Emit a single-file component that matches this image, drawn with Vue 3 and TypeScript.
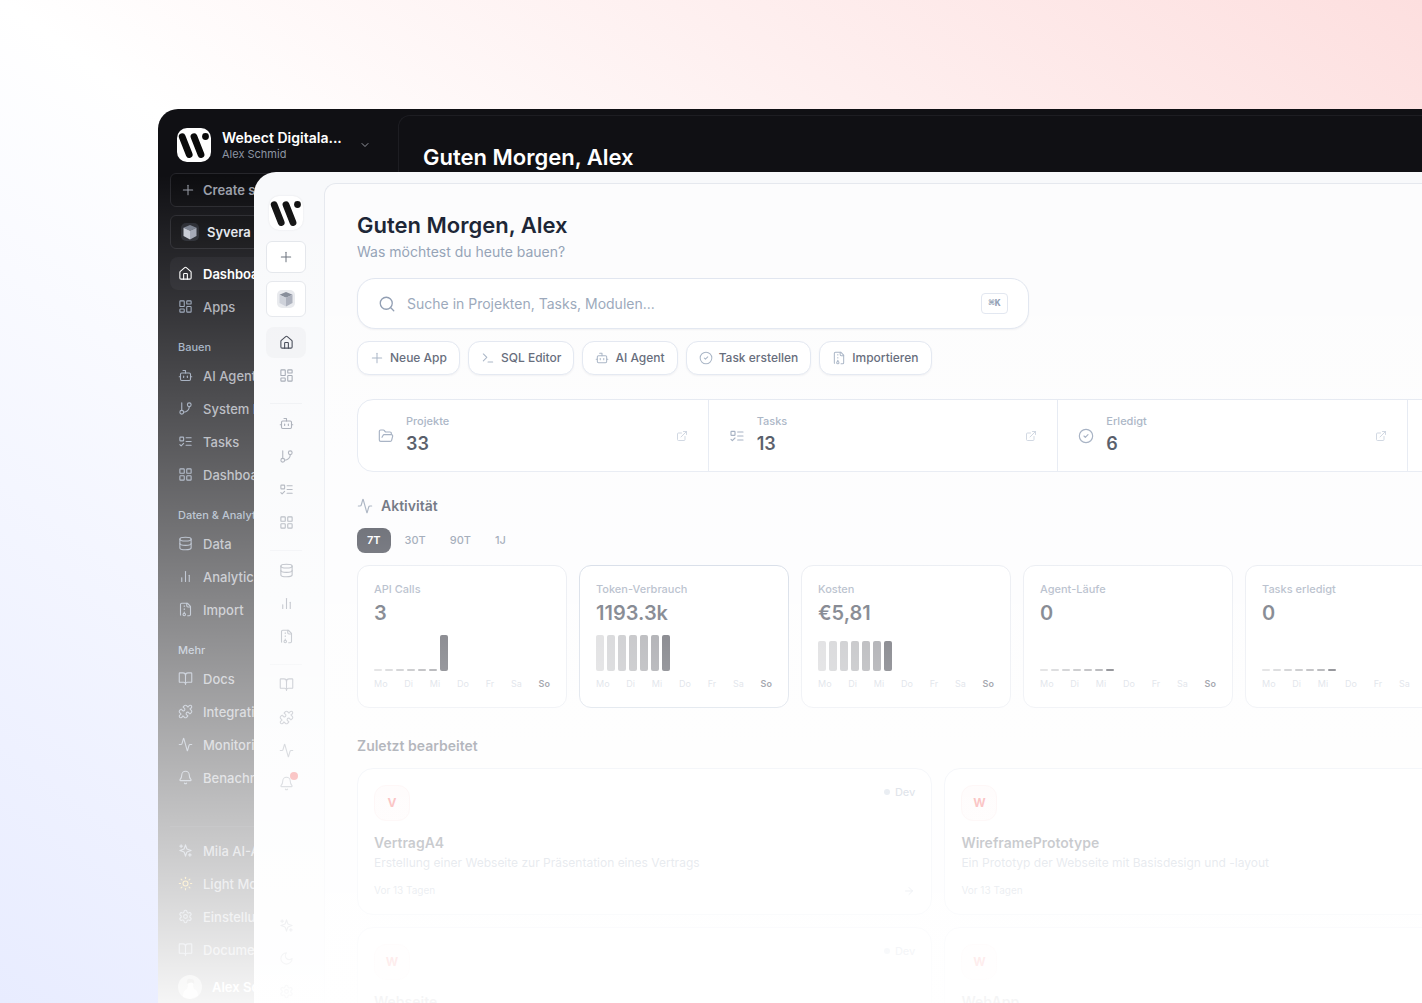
<script setup lang="ts">
interface NavItem {
  icon: string
  label: string
  active?: boolean
  badge?: boolean
  tone?: string
}
interface NavGroup {
  title?: string
  items: NavItem[]
}
interface Metric {
  label: string
  value: string
  bars: number[]
  active?: boolean
}
interface Project {
  name: string
  text?: string
}

const icons: Record<string, string> = {
  home: '<path d="M15 21v-8a1 1 0 0 0-1-1h-4a1 1 0 0 0-1 1v8"/><path d="M3 10a2 2 0 0 1 .709-1.528l7-5.999a2 2 0 0 1 2.582 0l7 5.999A2 2 0 0 1 21 10v9a2 2 0 0 1-2 2H5a2 2 0 0 1-2-2z"/>',
  apps: '<rect width="7" height="9" x="3" y="3" rx="1"/><rect width="7" height="5" x="14" y="3" rx="1"/><rect width="7" height="9" x="14" y="12" rx="1"/><rect width="7" height="5" x="3" y="16" rx="1"/>',
  bot: '<path d="M12 8V4H8"/><rect width="16" height="12" x="4" y="8" rx="2"/><path d="M2 14h2"/><path d="M20 14h2"/><path d="M15 13v2"/><path d="M9 13v2"/>',
  branch: '<path d="M6 3v12"/><circle cx="18" cy="6" r="3"/><circle cx="6" cy="18" r="3"/><path d="M18 9a9 9 0 0 1-9 9"/>',
  todo: '<rect x="3" y="5" width="6" height="6" rx="1"/><path d="m3 17 2 2 4-4"/><path d="M13 6h8"/><path d="M13 12h8"/><path d="M13 18h8"/>',
  grid: '<rect width="7" height="7" x="3" y="3" rx="1"/><rect width="7" height="7" x="14" y="3" rx="1"/><rect width="7" height="7" x="14" y="14" rx="1"/><rect width="7" height="7" x="3" y="14" rx="1"/>',
  data: '<ellipse cx="12" cy="5" rx="9" ry="3"/><path d="M3 5V19A9 3 0 0 0 21 19V5"/><path d="M3 12A9 3 0 0 0 21 12"/>',
  chart: '<path d="M18 20V10"/><path d="M12 20V4"/><path d="M6 20v-6"/>',
  archive: '<path d="M10 12v-1"/><path d="M10 18v-2"/><path d="M10 7V6"/><path d="M14 2v4a2 2 0 0 0 2 2h4"/><path d="M15.5 22H18a2 2 0 0 0 2-2V7l-5-5H6a2 2 0 0 0-2 2v16a2 2 0 0 0 .274 1.01"/><circle cx="10" cy="20" r="2"/>',
  book: '<path d="M12 7v14"/><path d="M3 18a1 1 0 0 1-1-1V4a1 1 0 0 1 1-1h5a4 4 0 0 1 4 4 4 4 0 0 1 4-4h5a1 1 0 0 1 1 1v13a1 1 0 0 1-1 1h-6a3 3 0 0 0-3 3 3 3 0 0 0-3-3z"/>',
  puzzle: '<path d="M15.39 4.39a1 1 0 0 0 1.68-.474 2.5 2.5 0 1 1 3.014 3.015 1 1 0 0 0-.474 1.68l1.683 1.682a2.414 2.414 0 0 1 0 3.414L19.61 15.39a1 1 0 0 1-1.68-.474 2.5 2.5 0 1 0-3.014 3.015 1 1 0 0 1 .474 1.68l-1.683 1.682a2.414 2.414 0 0 1-3.414 0L8.61 19.61a1 1 0 0 0-1.68.474 2.5 2.5 0 1 1-3.014-3.015 1 1 0 0 0 .474-1.68l-1.683-1.682a2.414 2.414 0 0 1 0-3.414L4.39 8.61a1 1 0 0 1 1.68.474 2.5 2.5 0 1 0 3.014-3.015 1 1 0 0 1-.474-1.68l1.683-1.682a2.414 2.414 0 0 1 3.414 0z"/>',
  activity: '<path d="M22 12h-2.48a2 2 0 0 0-1.93 1.46l-2.35 8.36a.25.25 0 0 1-.48 0L9.24 2.18a.25.25 0 0 0-.48 0l-2.35 8.36A2 2 0 0 1 4.49 12H2"/>',
  bell: '<path d="M10.268 21a2 2 0 0 0 3.464 0"/><path d="M3.262 15.326A1 1 0 0 0 4 17h16a1 1 0 0 0 .74-1.673C19.41 13.956 18 12.499 18 8A6 6 0 0 0 6 8c0 4.499-1.411 5.956-2.738 7.326"/>',
  sparkles: '<path d="m12 3-1.912 5.813a2 2 0 0 1-1.275 1.275L3 12l5.813 1.912a2 2 0 0 1 1.275 1.275L12 21l1.912-5.813a2 2 0 0 1 1.275-1.275L21 12l-5.813-1.912a2 2 0 0 1-1.275-1.275L12 3Z"/><path d="M5 3v4"/><path d="M19 17v4"/><path d="M3 5h4"/><path d="M17 19h4"/>',
  sun: '<circle cx="12" cy="12" r="4"/><path d="M12 2v2"/><path d="M12 20v2"/><path d="m4.93 4.93 1.41 1.41"/><path d="m17.66 17.66 1.41 1.41"/><path d="M2 12h2"/><path d="M20 12h2"/><path d="m6.34 17.66-1.41 1.41"/><path d="m19.07 4.93-1.41 1.41"/>',
  moon: '<path d="M12 3a6 6 0 0 0 9 9 9 9 0 1 1-9-9Z"/>',
  settings: '<path d="M12.22 2h-.44a2 2 0 0 0-2 2v.18a2 2 0 0 1-1 1.73l-.43.25a2 2 0 0 1-2 0l-.15-.08a2 2 0 0 0-2.73.73l-.22.38a2 2 0 0 0 .73 2.73l.15.1a2 2 0 0 1 1 1.72v.51a2 2 0 0 1-1 1.74l-.15.09a2 2 0 0 0-.73 2.73l.22.38a2 2 0 0 0 2.73.73l.15-.08a2 2 0 0 1 2 0l.43.25a2 2 0 0 1 1 1.73V20a2 2 0 0 0 2 2h.44a2 2 0 0 0 2-2v-.18a2 2 0 0 1 1-1.73l.43-.25a2 2 0 0 1 2 0l.15.08a2 2 0 0 0 2.73-.73l.22-.39a2 2 0 0 0-.73-2.73l-.15-.08a2 2 0 0 1-1-1.74v-.5a2 2 0 0 1 1-1.74l.15-.09a2 2 0 0 0 .73-2.73l-.22-.38a2 2 0 0 0-2.73-.73l-.15.08a2 2 0 0 1-2 0l-.43-.25a2 2 0 0 1-1-1.73V4a2 2 0 0 0-2-2z"/><circle cx="12" cy="12" r="3"/>',
  search: '<circle cx="11" cy="11" r="8"/><path d="m21 21-4.3-4.3"/>',
  plus: '<path d="M4 12h16"/><path d="M12 4v16"/>',
  terminal: '<path d="m4 17 6-6-6-6"/><path d="M12 19h8"/>',
  check: '<circle cx="12" cy="12" r="10"/><path d="m9 12 2 2 4-4"/>',
  folder: '<path d="m6 14 1.5-2.9A2 2 0 0 1 9.24 10H20a2 2 0 0 1 1.94 2.5l-1.54 6a2 2 0 0 1-1.95 1.5H4a2 2 0 0 1-2-2V5a2 2 0 0 1 2-2h3.9a2 2 0 0 1 1.69.9l.81 1.2a2 2 0 0 0 1.67.9H18a2 2 0 0 1 2 2v2"/>',
  external: '<path d="M15 3h6v6"/><path d="M10 14 21 3"/><path d="M18 13v6a2 2 0 0 1-2 2H5a2 2 0 0 1-2-2V8a2 2 0 0 1 2-2h6"/>',
  chevron: '<path d="m6 9 6 6 6-6"/>',
  arrow: '<path d="M5 12h14"/><path d="m12 5 7 7-7 7"/>',
}

const logo =
  '<path d="M5.200 8.700 12.200 26.500M17 8.700 24 26.500" stroke="#0a0a0a" stroke-width="6.800" stroke-linecap="round"/><circle cx="28.500" cy="8.500" r="3.400" fill="#0a0a0a"/>'
const cube =
  '<path d="M9 2 15.5 4.8 9 7.8 2.5 4.8Z" fill="#757c8b"/><path d="M2.500 4.800 9 7.800V16.500L2.500 13Z" fill="#c6cad4"/><path d="M15.500 4.800 9 7.800V16.500L15.500 13Z" fill="#9fa4b2"/>'

const groups: NavGroup[] = [
  { items: [{ icon: 'home', label: 'Dashboard', active: true }, { icon: 'apps', label: 'Apps' }] },
  {
    title: 'Bauen',
    items: [
      { icon: 'bot', label: 'AI Agent' },
      { icon: 'branch', label: 'System Map' },
      { icon: 'todo', label: 'Tasks' },
      { icon: 'grid', label: 'Dashboards' },
    ],
  },
  {
    title: 'Daten & Analytics',
    items: [
      { icon: 'data', label: 'Data' },
      { icon: 'chart', label: 'Analytics' },
      { icon: 'archive', label: 'Import' },
    ],
  },
  {
    title: 'Mehr',
    items: [
      { icon: 'book', label: 'Docs' },
      { icon: 'puzzle', label: 'Integrationen' },
      { icon: 'activity', label: 'Monitoring' },
      { icon: 'bell', label: 'Benachrichtigungen', badge: true },
    ],
  },
]

const darkFooter: NavItem[] = [
  { icon: 'sparkles', label: 'Mila AI-Agent' },
  { icon: 'sun', label: 'Light Mode', tone: 'sunny' },
  { icon: 'settings', label: 'Einstellungen' },
  { icon: 'book', label: 'Documentation' },
]
const lightFooter: NavItem[] = [
  { icon: 'sparkles', label: 'Mila AI-Agent' },
  { icon: 'moon', label: 'Dark Mode' },
  { icon: 'settings', label: 'Einstellungen' },
]

const actions = [
  { icon: 'plus', label: 'Neue App' },
  { icon: 'terminal', label: 'SQL Editor' },
  { icon: 'bot', label: 'AI Agent' },
  { icon: 'check', label: 'Task erstellen' },
  { icon: 'archive', label: 'Importieren' },
]

const stats = [
  { icon: 'folder', label: 'Projekte', value: '33' },
  { icon: 'todo', label: 'Tasks', value: '13' },
  { icon: 'check', label: 'Erledigt', value: '6' },
]

const ranges = ['7T', '30T', '90T', '1J']
const days = ['Mo', 'Di', 'Mi', 'Do', 'Fr', 'Sa', 'So']
const flat = [2, 2, 2, 2, 2, 2, 2]
const shades = [0.25, 0.32, 0.4, 0.47, 0.56, 0.65, 1]
const metrics: Metric[] = [
  { label: 'API Calls', value: '3', bars: [2, 2, 2, 2, 2, 2, 36] },
  { label: 'Token-Verbrauch', value: '1193.3k', bars: [36, 36, 36, 36, 36, 36, 36], active: true },
  { label: 'Kosten', value: '€5,81', bars: [30, 30, 30, 30, 30, 30, 30] },
  { label: 'Agent-Läufe', value: '0', bars: flat },
  { label: 'Tasks erledigt', value: '0', bars: flat },
]

const projects: Project[] = [
  { name: 'VertragA4', text: 'Erstellung einer Webseite zur Präsentation eines Vertrags' },
  { name: 'WireframePrototype', text: 'Ein Prototyp der Webseite mit Basisdesign und -layout' },
  { name: 'Webseite' },
  { name: 'WebApp' },
]
</script>

<template>
  <div class="stage">
    <section class="window dark">
      <aside class="side">
        <button class="workspace" type="button">
          <svg class="logo" viewBox="0 0 34 34" fill="none" v-html="logo" />
          <span class="who"><strong>Webect Digitala...</strong><small>Alex Schmid</small></span>
          <svg class="icon chevron" viewBox="0 0 24 24" v-html="icons.chevron" />
        </button>
        <button class="box create" type="button">
          <svg class="icon" viewBox="0 0 24 24" v-html="icons.plus" />Create something
        </button>
        <button class="box org" type="button">
          <svg class="cube" viewBox="0 0 18 18" v-html="cube" />Syvera GmbH
        </button>
        <nav>
          <template v-for="(group, g) in groups" :key="g">
            <h3 v-if="group.title">{{ group.title }}</h3>
            <a v-for="item in group.items" :key="item.label" href="#" :class="{ active: item.active }">
              <svg class="icon" viewBox="0 0 24 24" v-html="icons[item.icon]" />{{ item.label }}
            </a>
          </template>
        </nav>
        <nav class="foot">
          <a v-for="item in darkFooter" :key="item.label" href="#" :class="item.tone">
            <svg class="icon" viewBox="0 0 24 24" v-html="icons[item.icon]" />{{ item.label }}
          </a>
        </nav>
        <div class="user">
          <svg class="avatar" viewBox="0 0 24 24">
            <circle cx="12" cy="12" r="12" fill="#a3a5a2" />
            <path d="M5 22Q5 15 9 14L10 11Q8 5 12 4Q17 4 15 11L16 14Q20 15 20 21L12 24Z" fill="#f4f0ea" />
            <path d="M9 9Q8 3 13 4Q17 4 16 9Q14 6 9 9Z" fill="#5a544c" />
          </svg>
          <strong>Alex Schmid</strong>
        </div>
      </aside>
      <div class="panel"><h2>Guten Morgen, Alex</h2></div>
    </section>

    <section class="window light">
      <aside class="rail">
        <svg class="logo" viewBox="0 0 34 34" fill="none" v-html="logo" />
        <button class="tile" type="button" aria-label="Neu">
          <svg class="icon" viewBox="0 0 24 24" v-html="icons.plus" />
        </button>
        <button class="tile tall" type="button" aria-label="Organisation">
          <svg class="cube" viewBox="0 0 18 18" v-html="cube" />
        </button>
        <nav v-for="(group, g) in groups" :key="g">
          <a
            v-for="item in group.items"
            :key="item.label"
            href="#"
            :aria-label="item.label"
            :class="{ active: item.active }"
          >
            <svg class="icon" viewBox="0 0 24 24" v-html="icons[item.icon]" />
            <i v-if="item.badge" class="badge" />
          </a>
        </nav>
        <nav class="foot">
          <a v-for="item in lightFooter" :key="item.label" href="#" :aria-label="item.label">
            <svg class="icon" viewBox="0 0 24 24" v-html="icons[item.icon]" />
          </a>
        </nav>
      </aside>

      <main>
        <h1>Guten Morgen, Alex</h1>
        <p class="lead">Was möchtest du heute bauen?</p>
        <label class="search">
          <svg class="icon" viewBox="0 0 24 24" v-html="icons.search" />
          <input type="search" placeholder="Suche in Projekten, Tasks, Modulen..." aria-label="Suche" />
          <kbd>⌘K</kbd>
        </label>
        <div class="actions">
          <button v-for="a in actions" :key="a.label" type="button">
            <svg class="icon" viewBox="0 0 24 24" v-html="icons[a.icon]" />{{ a.label }}
          </button>
        </div>

        <div class="stats">
          <a v-for="s in stats" :key="s.label" href="#">
            <svg class="icon" viewBox="0 0 24 24" v-html="icons[s.icon]" />
            <span class="stat"><small>{{ s.label }}</small><b>{{ s.value }}</b></span>
            <svg class="icon ext" viewBox="0 0 24 24" v-html="icons.external" />
          </a>
          <div class="rest" />
        </div>

        <h2 class="activity">
          <svg class="icon" viewBox="0 0 24 24" v-html="icons.activity" />Aktivität
        </h2>
        <div class="tabs">
          <button v-for="(r, i) in ranges" :key="r" type="button" :class="{ on: i === 0 }">{{ r }}</button>
        </div>
        <div class="metrics">
          <article v-for="m in metrics" :key="m.label" :class="{ on: m.active }">
            <h3>{{ m.label }}</h3>
            <b>{{ m.value }}</b>
            <div class="bars">
              <i v-for="(h, i) in m.bars" :key="i" :style="{ height: h + 'px', opacity: shades[i] }" />
            </div>
            <div class="days"><span v-for="d in days" :key="d">{{ d }}</span></div>
          </article>
        </div>

        <h2 class="recent">Zuletzt bearbeitet</h2>
        <div class="projects">
          <article v-for="p in projects" :key="p.name">
            <header>
              <span class="initial">{{ p.name[0] }}</span>
              <span class="env">Dev</span>
            </header>
            <h3>{{ p.name }}</h3>
            <p v-if="p.text">{{ p.text }}</p>
            <footer v-if="p.text">
              Vor 13 Tagen
              <svg class="icon" viewBox="0 0 24 24" v-html="icons.arrow" />
            </footer>
          </article>
        </div>
      </main>
    </section>
  </div>
</template>

<style>
body {
  margin: 0;
  background: #fff;
}
</style>

<style scoped>
.stage {
  position: relative;
  height: 100vh;
  overflow: hidden;
  font-family: Inter, 'Liberation Sans', sans-serif;
  background: linear-gradient(to top right, #e8ecff 0%, #fff 50%, #fddfdf 100%);
}
.stage *,
.stage *::before,
.stage *::after {
  box-sizing: border-box;
}
h1,
h2,
h3,
p {
  margin: 0;
}
a {
  color: inherit;
  text-decoration: none;
}
button {
  font: inherit;
  color: inherit;
  cursor: pointer;
}
.icon {
  width: 15px;
  height: 15px;
  flex: none;
  fill: none;
  stroke: currentColor;
  stroke-width: 1.75;
  stroke-linecap: round;
  stroke-linejoin: round;
}
.logo {
  width: 34px;
  height: 34px;
  flex: none;
  border-radius: 10px;
  background: #fff;
}
.cube {
  width: 18px;
  height: 18px;
  flex: none;
  border-radius: 5px;
}

/* The two app windows overlap and run off the right and bottom edges. */
.window {
  position: absolute;
  display: flex;
  overflow: hidden;
}
.window::after {
  content: '';
  position: absolute;
  inset: 0;
  pointer-events: none;
}
.dark {
  left: 158px;
  top: 109px;
  right: 0;
  bottom: 0;
  border-radius: 20px 0 0 0;
  background: #101014;
  color: #a3a6af;
}
.dark::after {
  background: linear-gradient(rgba(255, 255, 255, 0) 66px, #fff 928px);
}
.light {
  left: 254px;
  top: 172px;
  bottom: 0;
  width: 133vw;
  border-radius: 22px 0 0 0;
  background: #f8f9fb;
}
.light::after {
  background: linear-gradient(rgba(255, 255, 255, 0) 0, #fff 865px);
}

/* Dark window */
.side {
  width: 240px;
  flex: none;
  padding: 19px 12px 0;
  display: flex;
  flex-direction: column;
}
.side > * {
  flex: none;
}
.workspace {
  display: flex;
  align-items: center;
  padding: 0 15px 0 7px;
  margin-bottom: 11px;
  border: 0;
  background: none;
  text-align: left;
}
.who {
  flex: 1;
  margin-left: 11px;
  display: flex;
  flex-direction: column;
}
.who strong {
  font-size: 14px;
  line-height: 18px;
  font-weight: 600;
  color: #fff;
}
.who small {
  font-size: 11px;
  line-height: 14px;
  color: #8d95a3;
}
.chevron {
  width: 12px;
  height: 12px;
}
.box {
  display: flex;
  align-items: center;
  height: 34px;
  padding: 0 10px;
  margin-bottom: 8px;
  border: 1px solid #26262b;
  border-radius: 6px;
  background: #0d0d10;
  font-size: 13px;
  font-weight: 600;
  white-space: nowrap;
}
.create {
  gap: 8px;
  color: #9a9ea8;
}
.create .icon {
  width: 14px;
  height: 14px;
}
.org {
  gap: 8px;
  color: #e4e7ee;
}
.dark .cube {
  background: #22242b;
}
nav {
  display: flex;
  flex-direction: column;
}
.side nav h3 {
  margin: 16px 8px 4px;
  font-size: 11px;
  line-height: 16px;
  font-weight: 500;
  color: #94a3b8;
}
.side nav a {
  display: flex;
  align-items: center;
  gap: 10px;
  height: 33px;
  padding: 0 8px;
  border-radius: 8px;
  font-size: 13px;
  font-weight: 500;
  white-space: nowrap;
}
.side nav a .icon {
  color: #8e9bb0;
}
.side nav a.active {
  background: #19191e;
  color: #fff;
  font-weight: 600;
}
.side nav a.active .icon {
  color: #fff;
}
.side nav a.sunny .icon {
  color: #f5b820;
}
.side .foot {
  margin-top: 32px;
  padding-top: 7px;
  border-top: 1px solid #1e1e24;
}
.user {
  display: flex;
  align-items: center;
  gap: 10px;
  height: 42px;
  padding: 0 8px;
  font-size: 13px;
  color: #fff;
}
.user strong {
  font-weight: 600;
}
.avatar {
  width: 24px;
  height: 24px;
  flex: none;
}
.panel {
  flex: 1;
  margin-top: 6px;
  padding: 25px 24px;
  border: solid #1d1d22;
  border-width: 1px 0 0 1px;
  border-radius: 12px 0 0 0;
}
.panel h2,
main h1 {
  font-size: 22px;
  line-height: 32px;
  font-weight: 600;
}
.panel h2 {
  color: #fff;
}

/* Light window: icon rail */
.rail {
  width: 70px;
  flex: none;
  padding: 24px 18px 0 12px;
  display: flex;
  flex-direction: column;
  align-items: center;
  color: #8d94a1;
}
.rail .logo {
  margin-bottom: 11px;
  box-shadow: 0 0 2px rgba(15, 23, 42, 0.1);
}
.tile {
  display: flex;
  align-items: center;
  justify-content: center;
  width: 40px;
  height: 32px;
  flex: none;
  margin-bottom: 8px;
  padding: 0;
  border: 1px solid #e2e5ea;
  border-radius: 6px;
  background: #fff;
  color: #5d6470;
}
.tile .icon {
  width: 14px;
  height: 14px;
}
.tile.tall {
  height: 36px;
  margin-bottom: 10px;
}
.light .cube {
  background: #e5e7eb;
}
.rail nav {
  width: 40px;
  flex: none;
  gap: 2px;
  position: relative;
}
.rail nav + nav {
  margin-top: 12px;
  padding-top: 5px;
}
.rail nav + nav::before {
  content: '';
  position: absolute;
  inset: 0 4px auto;
  border-top: 1px solid #eceef2;
}
.rail nav a {
  position: relative;
  display: flex;
  align-items: center;
  justify-content: center;
  height: 31px;
  border-radius: 8px;
}
.rail nav a.active {
  background: #f0f1f4;
  color: #1e2433;
}
.badge {
  position: absolute;
  top: 4px;
  right: 8px;
  width: 8px;
  height: 8px;
  border-radius: 50%;
  background: #ef4444;
}
.rail nav.foot {
  margin-top: 106px;
}
.rail nav.foot::before {
  display: none;
}

/* Light window: content */
main {
  flex: 1;
  min-width: 0;
  margin-top: 11px;
  padding: 25px 38px 0 32px;
  border: solid #e5e8ee;
  border-width: 1px 0 0 1px;
  border-radius: 12px 0 0 0;
  background: #fcfcfd;
}
main h1 {
  color: #0f172a;
}
.lead {
  font-size: 14px;
  line-height: 22px;
  color: #8b9ab0;
}
.search {
  display: flex;
  align-items: center;
  width: 672px;
  height: 51px;
  margin-top: 15px;
  padding: 0 20px;
  border: 1px solid #dde3ee;
  border-radius: 18px;
  background: #fff;
  box-shadow: 0 1px 2px rgba(15, 23, 42, 0.06);
  color: #7f8ea6;
}
.search .icon {
  width: 18px;
  height: 18px;
}
.search input {
  flex: 1;
  min-width: 0;
  margin-left: 11px;
  padding: 0;
  border: 0;
  outline: 0;
  background: none;
  font: inherit;
  font-size: 14px;
}
.search input::placeholder {
  color: #8b9ab0;
  opacity: 1;
}
kbd {
  width: 27px;
  border: 1px solid #dde3ee;
  border-radius: 4px;
  font-family: 'Liberation Mono', 'DejaVu Sans Mono', monospace;
  font-size: 10px;
  line-height: 19px;
  font-weight: 700;
  text-align: center;
  color: #8190a8;
}
.actions {
  display: flex;
  gap: 8px;
  margin-top: 12px;
}
.actions button {
  display: flex;
  align-items: center;
  gap: 6px;
  height: 34px;
  padding: 0 12px 1px;
  border: 1px solid #dde3ee;
  border-radius: 12px;
  background: #fff;
  box-shadow: 0 1px 2px rgba(15, 23, 42, 0.06);
  font-size: 12px;
  font-weight: 500;
  color: #3d4659;
}
.actions .icon {
  width: 14px;
  height: 14px;
  color: #94a3b8;
}
.stats {
  display: grid;
  grid-template-columns: repeat(5, 1fr);
  margin-top: 24px;
  border: 1px solid #dde3ee;
  border-radius: 16px;
  background: #fff;
}
.stats a {
  display: flex;
  align-items: center;
  gap: 12px;
  height: 71px;
  padding: 0 20px;
}
.stats a + a,
.rest {
  border-left: 1px solid #dde3ee;
}
.stats .icon {
  width: 16px;
  height: 16px;
  color: #8292ab;
}
.stats .ext {
  width: 12px;
  height: 12px;
  color: #b3bfd0;
}
.stat {
  flex: 1;
  display: flex;
  flex-direction: column;
}
.stat small {
  font-size: 11px;
  line-height: 16px;
  font-weight: 500;
  color: #8b9ab0;
}
.stat b {
  font-size: 18px;
  line-height: 30px;
  font-weight: 600;
  color: #0f172a;
}
main h2 {
  display: flex;
  align-items: center;
  gap: 8px;
  font-size: 14px;
  line-height: 20px;
  font-weight: 600;
  color: #1e293b;
}
main h2 .icon {
  width: 16px;
  height: 16px;
  color: #7b8aa0;
}
.activity {
  margin-top: 24px;
}
.tabs {
  display: flex;
  gap: 4px;
  margin: 12px 0;
}
.tabs button {
  height: 25px;
  padding: 0 10px 2px;
  border: 0;
  border-radius: 8px;
  background: none;
  font-size: 11px;
  font-weight: 500;
  color: #64748b;
}
.tabs button.on {
  background: #111522;
  color: #fff;
  font-weight: 600;
}
.metrics {
  display: flex;
  gap: 12px;
}
.metrics article {
  flex: 0 0 210px;
  padding: 16px;
  border: 1px solid #dde1ea;
  border-radius: 12px;
  background: #fff;
}
.metrics article.on {
  border-color: #bcc7d8;
}
.metrics h3 {
  font-size: 11px;
  line-height: 15px;
  font-weight: 500;
  color: #7d8ba3;
}
.metrics b {
  display: block;
  margin-top: 4px;
  font-size: 20px;
  line-height: 24px;
  font-weight: 600;
  color: #0f172a;
}
.bars {
  display: flex;
  align-items: flex-end;
  gap: 3px;
  height: 36px;
  margin-top: 10px;
}
.bars i {
  width: 8px;
  border-radius: 2px;
  background: #0a0c18;
}
.days {
  display: flex;
  justify-content: space-between;
  margin-top: 6px;
  font-size: 9px;
  line-height: 14px;
  color: #b9c2d0;
}
.days span:last-child {
  font-weight: 600;
  color: #1e293b;
}
.recent {
  margin: 28px 0 12px;
}
.projects {
  display: grid;
  grid-template-columns: repeat(3, 1fr);
  gap: 12px;
}
.projects article {
  padding: 16px;
  border: 1px solid #dde3ee;
  border-radius: 16px;
  background: #fff;
}
.projects article:nth-child(odd) {
  grid-column-start: 1;
}
.projects header {
  display: flex;
  justify-content: space-between;
}
.initial {
  width: 36px;
  border: 1px solid #fbe3e3;
  border-radius: 12px;
  background: #fef6f6;
  font-size: 12px;
  line-height: 34px;
  font-weight: 700;
  text-align: center;
  color: #ef2b2b;
}
.env {
  display: flex;
  align-items: center;
  gap: 5px;
  height: 14px;
  font-size: 11px;
  font-weight: 500;
  color: #94a3b8;
}
.env::before {
  content: '';
  width: 6px;
  height: 6px;
  border-radius: 50%;
  background: #b4c2d4;
}
.projects h3 {
  margin-top: 12px;
  font-size: 14px;
  line-height: 20px;
  font-weight: 600;
  color: #0f172a;
}
.projects p {
  font-size: 12px;
  line-height: 20px;
  color: #8b9ab0;
}
.projects footer {
  display: flex;
  align-items: center;
  justify-content: space-between;
  margin-top: 10px;
  font-size: 10px;
  line-height: 15px;
  color: #8b9ab0;
}
.projects footer .icon {
  width: 12px;
  height: 12px;
  color: #94a3b8;
}
</style>
